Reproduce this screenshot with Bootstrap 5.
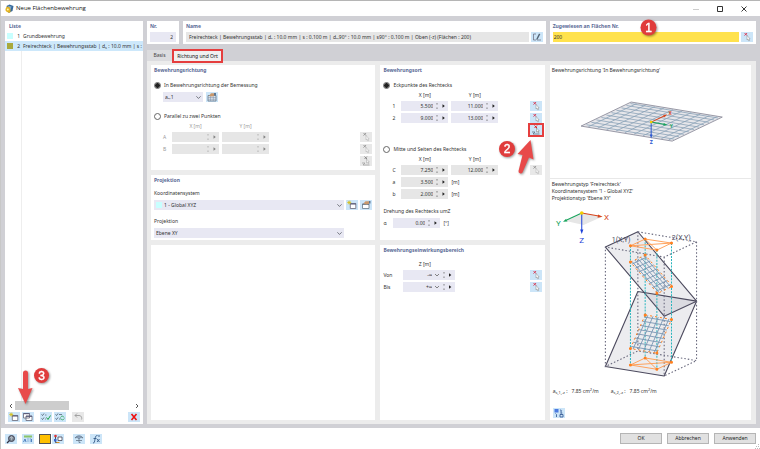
<!DOCTYPE html>
<html lang="de">
<head>
<meta charset="utf-8">
<meta name="viewport" content="width=device-width, initial-scale=1">
<title>Neue Flächenbewehrung</title>
<link rel="stylesheet" href="https://cdn.jsdelivr.net/npm/bootstrap@5.3.0/dist/css/bootstrap.min.css">
<style>
:root{--ui:"Noto Sans","Open Sans",sans-serif;--frame:#d0d0d5;--lav:#e8e8f3;--btn:#cce5f8;--red:#e53e3e}
body{font-family:var(--ui);font-size:5px;line-height:7px;color:#333;background:#fff}
.win{border-top:1px solid #b5b5b5;border-left:1px solid #c8c8c8}
.titlebar{height:15px;padding:0 4px;gap:1px;font-family:"Open Sans","Noto Sans",sans-serif;font-size:6px;color:#111}
.wbtn{border:0;background:none;padding:0;width:24px;height:12px;display:flex;align-items:center;justify-content:center}
.workarea{background:var(--frame);padding:5px 4px 4px 4px;gap:5px}
.pane{background:#fff;padding:0 3px}
.side{flex:0 0 138px;margin-right:-1px}
.ttl{font-size:5px;font-weight:700;line-height:10px;margin:0;color:#5a6a96}
.listrow{display:flex;align-items:center;height:10px;border:0;padding:0 1px 0 2px;background:none;width:100%;text-align:left;color:#333;white-space:nowrap;overflow:hidden}
.listrow.sel{background:#cde8fb}
.swatch{flex:none;width:6px;height:6px}
.listrow .no{flex:none;width:7px;text-align:right;margin-right:3px}
.listbody{flex:1;background:linear-gradient(90deg,transparent 16px,#eee 16px,#eee 17px,transparent 17px)}
.hscroll{height:9px;gap:2px}
.thumb{width:54px;height:9px;background:#cdcdcd}
.sq{border:0;padding:0;background:var(--btn);width:12px;height:10px;display:flex;align-items:center;justify-content:center;flex:none}
.sq svg{width:12px;height:10px;display:block}
.sq:disabled{background:#e8e8e8}
.sq:disabled svg{filter:grayscale(1);opacity:.6}
.toolset{gap:2px;margin-left:6px}
.inp{border:0;padding:0 3px;background:var(--lav);color:#333;height:10px;font-size:5px;line-height:10px;min-width:0;border-radius:0}
.inp.hot{background:#ffe24d;padding:0 1px}
.grey{background:#e6e6e6}
.headgrid{display:grid;grid-template-columns:32px 362fr 206fr;column-gap:4px}
.headgrid .pane{height:23px}
.fieldline{display:flex;align-items:center;gap:2px;height:12px}
.tabs{margin-top:5px;height:12px;align-items:flex-end}
.tab{border:0;padding:0;height:11px;width:25px;background:#dcdcdf;color:#444;text-align:center;font-size:5px}
.tab.on{width:51px;height:14px;line-height:10px;margin-bottom:-2px;background:#f0f0f0;border:2px solid var(--red);color:#111;position:relative}
.content{flex:1;background:#ececec;padding:4px 5px 4px 4px;display:grid;grid-template-columns:224fr 164fr 201fr;gap:5px}
.stack{display:flex;flex-direction:column;gap:5px;min-width:0}
.radioline{display:flex;align-items:center;gap:3px;height:12px}
.radioline .form-check-input{width:7px;height:7px;margin:0;border:1px solid #666;background:#fff;box-shadow:none}
.radioline .form-check-input:checked{background:radial-gradient(circle,#222 0 2px,#fff 3px)}
.unithead{display:flex;gap:3px;height:9px;align-items:center}
.unithead span{width:47px;text-align:center}
.line{display:flex;align-items:center;gap:3px;height:12px}
.indent{padding-left:9px}
.tight{gap:2px}
.lab{width:12px;flex:none;margin-left:3px;padding-left:6px}
.lab1{width:7px}
.lab2{width:17px}
.num{display:flex;align-items:center;width:47px;height:10px;background:var(--lav)}
.num.grey{background:#e6e6e6}
.num input{flex:1;min-width:0;width:10px;border:0;background:none;padding:0;text-align:right;font-size:5px;line-height:10px;height:10px;color:#333}
.num svg{flex:none;width:14px;height:10px;margin-left:1px}
.num.wide{width:52px}
.num.wide svg{width:22px}
.off{color:#999}
.drop{border:0;border-radius:0;background-color:var(--lav);height:10px;min-height:0;padding:0 12px 0 2px;font-size:5px;line-height:10px;color:#333;background-size:5px 5px;background-position:right 2px center}
.drop.short{width:40px}
.selwrap{display:flex;align-items:center;flex:1;background:var(--lav);padding-left:2px}
.t5{margin-top:5px}.t4{margin-top:4px}.t2{margin-top:2px}.t7{margin-top:7px}
.ring{outline:2px solid var(--red);outline-offset:0}
.callout{position:absolute;pointer-events:none;overflow:visible;z-index:3;filter:drop-shadow(1px 1px 1px rgba(0,0,0,.4))}
.callout text{font:400 12px "Liberation Sans",sans-serif;fill:#fff;stroke:#fff;stroke-width:.4;text-anchor:middle}
.c1{left:90px;top:-2px}.c2{right:5px;top:74px}.c3{left:11px;bottom:12px}
.drawing{display:block;width:100%;height:auto}
.drawing text{font-family:Roboto,sans-serif;text-anchor:middle}
.thin{vector-effect:non-scaling-stroke}
sub,sup{font-size:4px;line-height:0}
sub{bottom:-1px}
.foot{height:21px;padding:0 4px;gap:5px}
.gold{background:#ffc000;border:1px solid #555}
.act{border:1px solid #b5b5b5;border-radius:0;background:#e1e1e1;width:42px;height:11px;padding:0;font-size:5px;line-height:9px;color:#222;text-align:center}
.grip{position:absolute;right:0;bottom:0}
</style>
<script src="https://cdn.jsdelivr.net/npm/bootstrap@5.3.0/dist/js/bootstrap.bundle.min.js"></script>
</head>
<body>
<svg width="0" height="0" class="d-none">
  <symbol id="pick" viewBox="0 0 12 10"><path d="M3.500 1l2.600 2.600M6.100 1L3.500 3.600" stroke="#d9304a" stroke-width=".9"/><path d="M6 3.500v4.500l1-.8.8 1.800.8-.4-.7-1.700h1.200z" fill="#fff" stroke="#888" stroke-width=".5"/></symbol>
  <symbol id="pick2" viewBox="0 0 12 10"><path d="M4.500 .5l2.500 2.500M7 .5L4.500 3" stroke="#d22"/><path d="M6.500 3v4l1-.7.7 1.500.7-.3-.6-1.500h1z" fill="#fff" stroke="#777" stroke-width=".5"/><path d="M2 7h3L3 9h6.500" fill="none" stroke="#567" stroke-width=".7"/></symbol>
  <symbol id="spin" viewBox="0 0 14 10"><path d="M2 3.200l1-1.200 1 1.200zM2 6.800l1 1.200 1-1.200z" fill="#666"/><path d="M8.500 3.200l2.300 1.800-2.300 1.800z" fill="#222"/></symbol>
  <symbol id="spinwide" viewBox="0 0 22 10"><path d="M2 4l2 2 2-2" fill="none" stroke="#666" stroke-width=".8"/><path d="M10 3.200l1-1.200 1 1.200zM10 6.800l1 1.200 1-1.200z" fill="#666"/><path d="M16 3.200l2.300 1.800-2.300 1.800z" fill="#222"/></symbol>
  <symbol id="newwin" viewBox="0 0 12 10"><path d="M4.300 3.500h5.500v5h-5.500z" fill="#fff" stroke="#667" stroke-width=".8"/><path d="M4 4h6" stroke="#557"/><path d="M1.200 2.500h4M3.200 .6v4M1.800 1.200l2.800 2.700M4.600 1.200L1.800 3.900" stroke="#d6c020" stroke-width=".8"/></symbol>
  <symbol id="copywin" viewBox="0 0 12 10"><path d="M1.500 1.500h6v4.500h-6zM4 4h6v4.500H4z" fill="#fff" stroke="#667" stroke-width=".8"/><path d="M1.500 1.700h6M4 4.300h6" stroke="#557"/></symbol>
  <symbol id="tune" viewBox="0 0 12 10"><path d="M2.500 4h6.500v4.500H2.500z" fill="#fff" stroke="#678" stroke-width=".8"/><path d="M2.500 4.200H9" stroke="#567"/><path d="M3.500 3.500l2-2.300H9.500v2.300L6.500 4.500z" fill="#c9986c"/><path d="M9 1h1.500v2.500H9z" fill="#5c7896"/></symbol>
  <symbol id="tunegrid" viewBox="0 0 12 10"><path d="M2 3.500h8V9H2z" fill="#dde6ef" stroke="#678" stroke-width=".8"/><path d="M2 5.500h8M2 7.300h8M4.500 4v5M7.300 4v5" stroke="#7c8fa6" stroke-width=".5"/><path d="M3 4l2-2.800h3.500V3.500L6 4.500z" fill="#c9986c"/><path d="M8 1h2v2.500H8z" fill="#5c7896"/></symbol>
  <symbol id="edit" viewBox="0 0 12 10"><path d="M5 2H2.500v6H5M6 8h4" fill="none" stroke="#667" stroke-width=".7"/><path d="M5.500 6.500l2.500-5 1.300.7-2.600 5-1.300.7z" fill="#567"/></symbol>
  <symbol id="checks" viewBox="0 0 12 10"><path d="M1.500 2.500l1 1L4 1.500M1.500 6.500l1 1L4 5.500" fill="none" stroke="#456" stroke-width=".8"/><path d="M5 3h1.500M5 7h1" stroke="#456" stroke-width=".6"/><path d="M6.500 5.500l1.500 2 2.500-4" fill="none" stroke="#1fa24a" stroke-width="1"/></symbol>
  <symbol id="checkswap" viewBox="0 0 12 10"><path d="M1.500 2.500l1 1L4 1.500M1.500 6.500l1 1L4 5.500" fill="none" stroke="#456" stroke-width=".8"/><path d="M5 2.500h3M5 7h1.500" stroke="#456" stroke-width=".7"/><path d="M6.500 5.500c1-2 3-1.500 3.500 0M10.300 6.500c-1 2-3 1.500-3.500 0" fill="none" stroke="#1fa24a" stroke-width=".8"/></symbol>
</svg>
<div class="win d-flex flex-column min-vh-100">
  <header class="titlebar d-flex align-items-center">
    <svg width="10" height="10" viewBox="0 0 10 10"><path d="M1.500 2l3-1.500L8.500 2l-1 5-4 2z" fill="#37689a"/><path d="M2.500 1.500l4 1-1 3.500z" fill="#7ba6cc"/><path d="M1.500 3c3-1 5 2 3.500 6L2 8c-2-1-2-3-.5-5z" fill="#e2b21f"/><circle cx="2.800" cy="5.500" r="1" fill="#fff3b0"/></svg>
    <span>Neue Flächenbewehrung</span>
    <div class="ms-auto d-flex">
      <button class="wbtn" aria-label="Minimieren"><svg width="6" height="6"><path d="M0 3.500h6" stroke="#ccc"/></svg></button>
      <button class="wbtn" aria-label="Maximieren"><svg width="6" height="6"><path d="M.5 .5h5v5h-5z" fill="none" stroke="#333"/></svg></button>
      <button class="wbtn" aria-label="Schließen"><svg width="6" height="6"><path d="M.5 .5l5 5M5.500 .5l-5 5" stroke="#222" stroke-width=".9"/></svg></button>
    </div>
  </header>

  <main class="workarea d-flex flex-grow-1">
    <section class="pane side d-flex flex-column position-relative px-0">
      <h2 class="ttl px-1">Liste</h2>
      <button class="listrow"><span class="swatch" style="background:#c8ffff"></span><span class="no">1</span><span>Grundbewehrung</span></button>
      <button class="listrow sel"><span class="swatch" style="background:#a9a93c"></span><span class="no">2</span><span>Freirechteck | Bewehrungsstab | d<sub>s</sub> : 10.0 mm | s :</span></button>
      <div class="listbody"></div>
      <div class="hscroll d-flex align-items-center px-1">
        <svg width="4" height="6"><path d="M3 1L1 3l2 2" fill="none" stroke="#444" stroke-width=".9"/></svg>
        <div class="thumb"></div>
        <svg width="4" height="6" class="ms-auto"><path d="M1 1l2 2-2 2" fill="none" stroke="#444" stroke-width=".9"/></svg>
      </div>
      <div class="d-flex align-items-center t2" style="padding:0 3px 2px">
        <div class="d-flex tight">
          <button class="sq" aria-label="Neu"><svg><use href="#newwin"/></svg></button>
          <button class="sq" aria-label="Kopieren"><svg><use href="#copywin"/></svg></button>
        </div>
        <div class="d-flex toolset">
          <button class="sq" aria-label="Alle auswählen"><svg><use href="#checks"/></svg></button>
          <button class="sq" aria-label="Auswahl umkehren"><svg><use href="#checkswap"/></svg></button>
          <button class="sq ms-1" disabled aria-label="Rückgängig"><svg viewBox="0 0 12 10"><path d="M3 3.500h4c3 0 3 3.500 2.500 4M5 1.500l-2 2 2 2" fill="none" stroke="#666" stroke-width=".9"/></svg></button>
        </div>
        <button class="sq ms-auto" aria-label="Löschen"><svg viewBox="0 0 12 10"><path d="M3.500 2l5 6M8.500 2l-5 6" stroke="#e11" stroke-width="1.600"/></svg></button>
      </div>
      <svg class="callout c3" width="40" height="44" viewBox="0 0 40 44"><path d="M7 5a2.500 2.500 0 0 1 5 0v16l4.500-1L9.500 36 2 20l5 1z" fill="#e84a4a"/><circle cx="25.500" cy="7.500" r="7.500" fill="#e03c3c"/><text x="25.500" y="11.500">3</text></svg>
    </section>

    <div class="d-flex flex-column flex-grow-1">
      <div class="headgrid">
        <section class="pane"><h2 class="ttl">Nr.</h2><div class="fieldline"><input class="inp w-100 text-end" value="2" aria-label="Nr."></div></section>
        <section class="pane"><h2 class="ttl">Name</h2><div class="fieldline"><input class="inp grey flex-grow-1" readonly value="Freirechteck | Bewehrungsstab | dₛ : 10.0 mm | s : 0.100 m | dₛ,90° : 10.0 mm | s90° : 0.100 m | Oben (-z) (Flächen : 200)" aria-label="Name"><button class="sq" aria-label="Name bearbeiten"><svg><use href="#edit"/></svg></button></div></section>
        <section class="pane position-relative"><h2 class="ttl">Zugewiesen an Flächen Nr.</h2><div class="fieldline"><input class="inp hot flex-grow-1" value="200" aria-label="Zugewiesen an Flächen Nr."><button class="sq" aria-label="Flächen wählen"><svg><use href="#pick"/></svg></button></div>
          <svg class="callout c1" width="17" height="17"><circle cx="8.500" cy="8.500" r="8" fill="#e03c3c"/><text x="8.500" y="12.500">1</text></svg>
        </section>
      </div>

      <div class="tabs d-flex" role="tablist">
        <button class="tab" role="tab">Basis</button>
        <button class="tab on" role="tab" aria-selected="true">Richtung und Ort</button>
      </div>

      <div class="content">
        <div class="stack">
          <section class="pane" style="min-height:105px">
            <h2 class="ttl">Bewehrungsrichtung</h2>
            <div class="radioline t4"><input class="form-check-input" type="radio" name="dir" id="r1" checked><label for="r1">In Bewehrungsrichtung der Bemessung</label></div>
            <div class="line indent"><select class="form-select drop short" aria-label="Richtung"><option>aₛ,1</option></select><button class="sq" aria-label="Bemessung"><svg><use href="#tunegrid"/></svg></button></div>
            <div class="radioline t7"><input class="form-check-input" type="radio" name="dir" id="r2"><label for="r2">Parallel zu zwei Punkten</label></div>
            <div class="unithead off"><i class="lab"></i><span>X [m]</span><span>Y [m]</span></div>
            <div class="line off"><span class="lab">A</span><div class="num grey"><input disabled aria-label="A X"><svg opacity=".5"><use href="#spin"/></svg></div><div class="num grey"><input disabled aria-label="A Y"><svg opacity=".5"><use href="#spin"/></svg></div><button class="sq ms-auto" disabled aria-label="Punkt A wählen"><svg><use href="#pick"/></svg></button></div>
            <div class="line off"><span class="lab">B</span><div class="num grey"><input disabled aria-label="B X"><svg opacity=".5"><use href="#spin"/></svg></div><div class="num grey"><input disabled aria-label="B Y"><svg opacity=".5"><use href="#spin"/></svg></div><button class="sq ms-auto" disabled aria-label="Punkt B wählen"><svg><use href="#pick"/></svg></button></div>
            <div class="line"><button class="sq ms-auto" disabled aria-label="Beide Punkte wählen"><svg><use href="#pick2"/></svg></button></div>
          </section>
          <section class="pane" style="min-height:65px">
            <h2 class="ttl">Projektion</h2>
            <div class="line t2"><label for="ks">Koordinatensystem</label></div>
            <div class="line tight"><div class="selwrap"><span class="swatch" style="background:#c8ffff"></span><select id="ks" class="form-select drop"><option>1 - Global XYZ</option></select></div><button class="sq" aria-label="Neues Koordinatensystem"><svg><use href="#newwin"/></svg></button><button class="sq" aria-label="Koordinatensystem bearbeiten"><svg><use href="#tune"/></svg></button></div>
            <div class="line t4"><label for="pj">Projektion</label></div>
            <div class="line" style="padding-right:28px"><select id="pj" class="form-select drop"><option>Ebene XY</option></select></div>
          </section>
          <section class="pane flex-grow-1"></section>
        </div>

        <div class="stack">
          <section class="pane position-relative" style="min-height:175px">
            <h2 class="ttl">Bewehrungsort</h2>
            <div class="radioline t4"><input class="form-check-input" type="radio" name="loc" id="r3" checked><label for="r3">Eckpunkte des Rechtecks</label></div>
            <div class="unithead"><i class="lab"></i><span>X [m]</span><span>Y [m]</span></div>
            <div class="line"><span class="lab">1</span><div class="num"><input value="5.500" aria-label="1 X"><svg><use href="#spin"/></svg></div><div class="num"><input value="11.000" aria-label="1 Y"><svg><use href="#spin"/></svg></div><button class="sq ms-auto" aria-label="Punkt 1 wählen"><svg><use href="#pick"/></svg></button></div>
            <div class="line"><span class="lab">2</span><div class="num"><input value="9.000" aria-label="2 X"><svg><use href="#spin"/></svg></div><div class="num"><input value="13.000" aria-label="2 Y"><svg><use href="#spin"/></svg></div><button class="sq ms-auto" aria-label="Punkt 2 wählen"><svg><use href="#pick"/></svg></button></div>
            <div class="line"><button class="sq ms-auto ring" aria-label="Rechteck wählen"><svg><use href="#pick2"/></svg></button></div>
            <div class="radioline t7"><input class="form-check-input" type="radio" name="loc" id="r4"><label for="r4">Mitte und Seiten des Rechtecks</label></div>
            <div class="unithead"><i class="lab"></i><span>X [m]</span><span>Y [m]</span></div>
            <div class="line"><span class="lab">C</span><div class="num grey"><input value="7.250" aria-label="C X"><svg><use href="#spin"/></svg></div><div class="num grey"><input value="12.000" aria-label="C Y"><svg><use href="#spin"/></svg></div><button class="sq ms-auto" disabled aria-label="Mitte wählen"><svg><use href="#pick"/></svg></button></div>
            <div class="line"><span class="lab">a</span><div class="num grey"><input value="3.500" aria-label="a"><svg><use href="#spin"/></svg></div><span>[m]</span></div>
            <div class="line"><span class="lab">b</span><div class="num grey"><input value="2.000" aria-label="b"><svg><use href="#spin"/></svg></div><span>[m]</span></div>
            <div class="line t5">Drehung des Rechtecks umZ</div>
            <div class="line"><label for="al" class="lab1">α</label><div class="num"><input id="al" value="0.00"><svg><use href="#spin"/></svg></div><span>[°]</span></div>
            <svg class="callout c2" width="42" height="34" viewBox="0 0 42 34"><circle cx="9" cy="10" r="8" fill="#e03c3c"/><text x="9" y="14">2</text><path d="M20.500 32a2.200 2.200 0 0 0 4 1.500L31 18.500l4.500 2L32.500 1 19.500 15l5 1z" fill="#e84a4a"/></svg>
          </section>
          <section class="pane flex-grow-1">
            <h2 class="ttl">Bewehrungseinwirkungsbereich</h2>
            <div class="unithead t5"><i class="lab"></i><span>Z [m]</span></div>
            <div class="line"><label for="von" class="lab2">Von</label><div class="num wide"><input id="von" value="-∞"><svg><use href="#spinwide"/></svg></div><button class="sq ms-auto" aria-label="Von wählen"><svg><use href="#pick"/></svg></button></div>
            <div class="line"><label for="bis" class="lab2">Bis</label><div class="num wide"><input id="bis" value="+∞"><svg><use href="#spinwide"/></svg></div><button class="sq ms-auto" aria-label="Bis wählen"><svg><use href="#pick"/></svg></button></div>
          </section>
        </div>

        <section class="pane px-0 d-flex flex-column">
          <div style="padding:2px 2px 0">Bewehrungsrichtung 'In Bewehrungsrichtung'</div>
          <svg class="drawing" viewBox="550 74 201 104" role="img" aria-label="Bewehrungsrichtung">
            <g transform="matrix(5 -2.4 9.1 1.5 581 126)"><path class="thin" d="M0 0h10v10H0z" fill="#e6e6ea" stroke="#8f8f9d" stroke-width=".9"/><path class="thin" d="M.2 .7h9.600M.2 1.700h9.600M.2 2.700h9.600M.2 3.700h9.600M.2 4.700h9.600M.2 5.700h9.600M.2 6.700h9.600M.2 7.700h9.600M.2 8.700h9.600M.2 9.500h9.600M.7 .2v9.600M1.700 .2v9.600M2.700 .2v9.600M3.700 .2v9.600M4.700 .2v9.600M5.700 .2v9.600M6.700 .2v9.600M7.700 .2v9.600M8.700 .2v9.600M9.500 .2v9.600" fill="none" stroke="#8aa2b8" stroke-width=".8"/></g>
            <path d="M651 122l14-6.500" stroke="#d6451c"/><path d="M667 114.500l-4 .5 1.200 2.300z" fill="#d6451c"/>
            <path d="M651 122l14 2.500" stroke="#17a35b"/><path d="M667.500 124.800l-4-2-.3 2.800z" fill="#17a35b"/>
            <path d="M651 122v14" stroke="#2b57d0"/><path d="M651 138.500l-1.400-4h2.800z" fill="#2b57d0"/><circle cx="651" cy="122" r="1.300" fill="#f5d000"/>
            <g font-size="5" font-weight="700"><text x="670" y="115" fill="#d6451c">X</text><text x="671" y="128" fill="#17a35b">Y</text><text x="651" y="144" fill="#2b57d0">Z</text></g>
          </svg>
          <div style="border-top:1px solid #e8e8e8;padding:2px 2px 0">Bewehrungstyp 'Freirechteck'<br>Koordinatensystem '1 - Global XYZ'<br>Projektionstyp 'Ebene XY'</div>
          <svg class="drawing" viewBox="550 203 201 184" role="img" aria-label="Freirechteck">
            <path d="M566 222l15.500-8 21 3.500-19 8.500z" fill="#e6e6e6"/>
            <path d="M581.700 214l-15 7" stroke="#17a35b"/><path d="M563 222.800l4.500-.3-1.400-2.900z" fill="#17a35b"/>
            <path d="M581.700 214l17 3" stroke="#d6451c"/><path d="M602.500 217.700l-4.500-2.300-.5 3.200z" fill="#d6451c"/>
            <path d="M581.700 214v17" stroke="#1a3fd8"/><path d="M581.700 235l-1.600-4.500h3.200z" fill="#1a3fd8"/><circle cx="581.700" cy="214" r="1.800" fill="#f5d000"/>
            <g font-size="8"><text x="558.500" y="226.500" fill="#17a35b">Y</text><text x="606.500" y="221" fill="#d6451c">X</text><text x="581.700" y="243.500" fill="#1a3fd8">Z</text></g>
            <g stroke="#4c4a5e" stroke-width="1.100" stroke-linejoin="round">
              <path d="M605.300 248l32.400-15.300L696.300 302 664 317z" fill="#62627a" fill-opacity=".12"/>
              <path d="M637.700 292.300l58.600 9.700L664 376.700l-58.700-9.400z" fill="#62627a" fill-opacity=".12"/>
            </g>
            <g fill="none" stroke="#6a6a7e" stroke-width="1.100" stroke-dasharray="1.500 2">
              <path d="M637.700 232.700l58.600 10L664 258l-58.700-10v119.300l32.400-15.600 58.600 9.600L664 376.700M637.700 232.700v119M696.300 242.700v118.600M664 258v118.700"/>
            </g>
            <path d="M630.300 246.700v119M645 240v118.700M671.300 244v119M656.700 251v119" stroke="#27b5bd" stroke-width="1" stroke-dasharray="2 1.200"/>
            <g fill="none" stroke="#ff9a4d" stroke-width=".9"><path d="M630.300 246.700L645 240l26.300 4-14.600 7zM630.300 246.700l41-2.700M645 240l11.700 11M630.300 365.700l14.700-7 26.300 4.300-14.600 7zM630.300 365.700l41-2.700M645 358.700l11.700 11.300"/></g>
            <g transform="matrix(2.94 -1.4 3.4 3.9 630.3 263)" fill="none"><path class="thin" d="M.5 0v8M1.500 0v8M2.500 0v8M3.500 0v8M4.500 0v8M0 .5h5M0 1.500h5M0 2.500h5M0 3.500h5M0 4.500h5M0 5.500h5M0 6.500h5M0 7.500h5" stroke="#7895b2" stroke-width=".9"/><path class="thin" d="M0 0h5v8H0z" stroke="#ff7f1e" stroke-width="1" stroke-dasharray="2 3"/></g>
            <g transform="matrix(5.26 .92 -1.84 4.2 645 315.7)" fill="none"><path class="thin" d="M.5 0v8M1.500 0v8M2.500 0v8M3.500 0v8M4.500 0v8M0 .5h5M0 1.500h5M0 2.500h5M0 3.500h5M0 4.500h5M0 5.500h5M0 6.500h5M0 7.500h5" stroke="#7895b2" stroke-width=".9"/><path class="thin" d="M0 0h5v8H0z" stroke="#ff7f1e" stroke-width="1" stroke-dasharray="2 3"/></g>
            <path d="M630.300 246.700h0M645 240h0M671.300 244h0M656.700 251h0M630.300 365.700h0M645 358.700h0M671.300 363h0M656.700 370h0M630.300 263h0M645 256h0M671.300 287.300h0M656.700 294h0M645 315.700h0M671.300 320.300h0M630.300 349.300h0M656.700 353.700h0" stroke="#ff7f1e" stroke-width="3" stroke-linecap="round"/>
            <g font-size="7" fill="#4c4a5e"><text x="621" y="243">1(X,Y)</text><text x="681" y="241">2(X,Y)</text></g>
          </svg>
          <div class="d-flex" style="gap:12px;padding:2px 3px 0"><span>a<sub>s,1,-z</sub> :&nbsp;&nbsp; 7.85 cm<sup>2</sup>/m</span><span>a<sub>s,2,-z</sub> :&nbsp;&nbsp; 7.85 cm<sup>2</sup>/m</span></div>
          <div class="mt-auto" style="padding:0 3px 2px"><button class="sq" aria-label="Darstellung"><svg viewBox="0 0 12 10"><path d="M1.500 1h4v3.500h-4z" fill="#4a7be0"/><path d="M2.500 5.500l1 1v2.500M7 2c2 0 2 1.500.5 2 2 .3 2 2-.3 2M7 6.500h3V9H7z" fill="none" stroke="#3a5f98" stroke-width=".9"/></svg></button></div>
        </section>
      </div>
    </div>
  </main>

  <footer class="foot d-flex align-items-center position-relative">
    <button class="sq" aria-label="Hilfe"><svg viewBox="0 0 12 10"><circle cx="6.500" cy="4.500" r="3" fill="#7d8894" stroke="#445"/><path d="M4.500 6.500l-2.500 2.500" stroke="#334" stroke-width="1.200"/><path d="M5.600 4c0-1.500 2-1.200 1.700 0l-.8.8v.8" stroke="#fff" stroke-width=".6" fill="none"/></svg></button>
    <button class="sq" aria-label="Einheiten"><svg viewBox="0 0 12 10"><path d="M2 1.500h8v2H2z" fill="#8bc46a"/><path d="M1.500 8l1.500-3 1 3M5.500 5h1M5.500 7h1M7.800 5h1M7.800 7h1M9.500 5v3" stroke="#4276b8" stroke-width=".9" fill="none"/></svg></button>
    <div class="d-flex" style="gap:1px">
      <button class="sq gold" aria-label="Farbe"></button>
      <button class="sq" aria-label="Anzeige"><svg viewBox="0 0 12 10"><circle cx="3.500" cy="2" r="1.300" fill="#d33"/><path d="M3.500 3v5.500H6" stroke="#333" stroke-width=".8" fill="none"/><path d="M2 5h2.500v2.500H2z" fill="#3a66d0"/><path d="M6 3h4v3.500H6z" fill="#fff" stroke="#445" stroke-width=".8"/><path d="M4.500 8.500h3" stroke="#e09020"/></svg></button>
    </div>
    <button class="sq ms-1" aria-label="Ansicht"><svg viewBox="0 0 12 10"><path d="M2 4c2-3 6-3 8 0-2-1-3 0-4 1-1-1-2-2-4-1z" fill="#8ba3c0" stroke="#567" stroke-width=".6"/><path d="M3 6.500h6M6 5v3.500h1.500" fill="none" stroke="#678" stroke-width=".8"/></svg></button>
    <button class="sq" aria-label="Formel"><svg viewBox="0 0 12 10"><path d="M3 9c1.500 0 1.500-1 2-4s1-3.500 2.500-3.500M3.500 4.500h3M7 5l2.500 3M9.500 5L7 8M8 2h2" fill="none" stroke="#345a88" stroke-width=".9"/></svg></button>
    <div class="ms-auto d-flex" style="gap:5px">
      <button class="act">OK</button><button class="act">Abbrechen</button><button class="act">Anwenden</button>
    </div>
    <svg class="grip" width="5" height="5"><path d="M3.500 0v1M1.500 2v1M3.500 2v1M0 4.500h1M2 4.500h1M4 4.500h1" stroke="#bbb" stroke-width="1"/></svg>
  </footer>
</div>
</body>
</html>
